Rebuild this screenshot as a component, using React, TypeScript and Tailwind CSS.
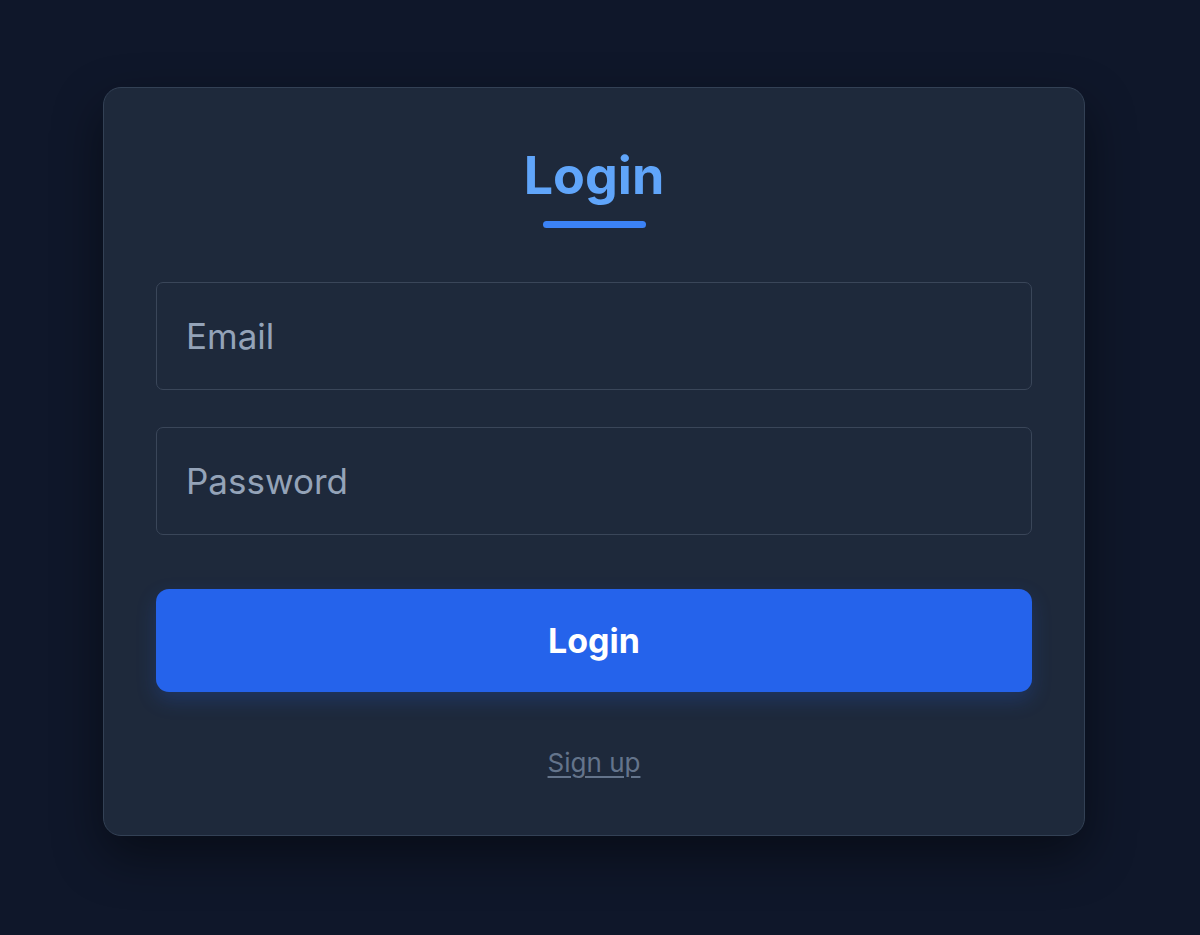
import React from 'react';

export default function App() {
  return (
    <div
      className="min-h-[935px] w-full bg-[#0f172a] pl-[103px] pt-[87px]"
      style={{ fontFamily: 'Inter, "Noto Sans", sans-serif' }}
    >
      <div className="flex w-[982px] flex-col items-center rounded-[18px] border border-[#334155] bg-[#1e293b] px-[52px] pt-[62px] pb-[56px] shadow-[0_20px_50px_rgba(0,0,0,0.45)]">
        <h1 className="text-[52px] font-bold leading-none text-[#60a5fa]">Login</h1>
        <div className="mt-[19px] h-[7px] w-[103px] rounded-full bg-[#3b82f6]" />

        <form className="mt-[54px] flex w-full flex-col" onSubmit={e => e.preventDefault()}>
          <input
            type="email"
            placeholder="Email"
            className="h-[108px] w-full rounded-[7px] border border-[#3a4659] bg-[#1e293b] px-[29px] text-[35px] text-[#e2e8f0] outline-none placeholder:text-[#94a3b8]"
          />
          <input
            type="password"
            placeholder="Password"
            className="mt-[37px] h-[108px] w-full rounded-[7px] border border-[#3a4659] bg-[#1e293b] px-[29px] text-[35px] text-[#e2e8f0] outline-none placeholder:text-[#94a3b8]"
          />
          <button
            type="submit"
            className="mt-[54px] h-[103px] w-full rounded-[13px] bg-[#2563eb] text-[34px] font-bold text-white shadow-[0_8px_20px_rgba(37,99,235,0.22)]"
          >
            Login
          </button>
        </form>

        <a href="#" className="mt-[55px] text-[26px] leading-[32px] text-[#64748b] underline underline-offset-4">
          Sign up
        </a>
      </div>
    </div>
  );
}
